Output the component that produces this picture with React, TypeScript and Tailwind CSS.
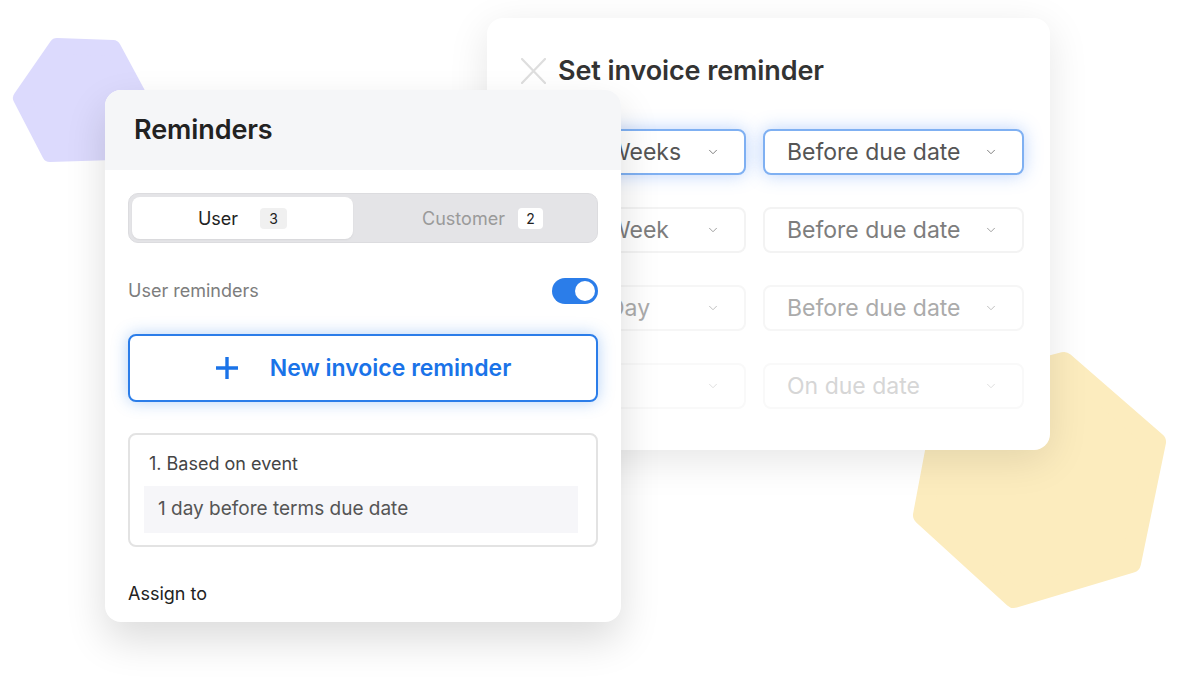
import { ChevronDown } from 'lucide-react';

type Row = { unit: string; rel: string; tone: 'active' | 'soft' | 'faint' | 'ghost' };

const rows: Row[] = [
  { unit: 'Weeks', rel: 'Before due date', tone: 'active' },
  { unit: 'Week', rel: 'Before due date', tone: 'soft' },
  { unit: 'Day', rel: 'Before due date', tone: 'faint' },
  { unit: '', rel: 'On due date', tone: 'ghost' },
];

const toneBox = {
  active: 'border-[#7fb0f2] shadow-[0_0_18px_rgba(59,130,246,0.35)] text-[#555]',
  soft: 'border-[#f3f3f3] text-[#7d7d7d]',
  faint: 'border-[#f6f6f6] text-[#ababab]',
  ghost: 'border-[#f9f9f9] text-[#d6d6d6]',
};

const toneChevron = {
  active: 'text-[#777]',
  soft: 'text-[#999]',
  faint: 'text-[#bbb]',
  ghost: 'text-[#ddd]',
};

function Select({ label, tone, className }: { label: string; tone: Row['tone']; className: string }) {
  return (
    <div className={`shrink-0 h-[46px] flex items-center justify-between pl-[22px] pr-[24px] bg-white border-2 rounded-lg ${toneBox[tone]} ${className}`}>
      <span>{label}</span>
      <ChevronDown className={`w-[14px] h-[14px] ${toneChevron[tone]}`} strokeWidth={1.6} />
    </div>
  );
}

function Hexagons() {
  return (
    <>
      <svg className="absolute left-0 top-0" width="170" height="180" viewBox="0 0 170 180">
        <polygon
          points="57,46 113,48 141,100 113,152 50,154 21,98"
          fill="#dcdafd"
          stroke="#dcdafd"
          strokeWidth="16"
          strokeLinejoin="round"
        />
      </svg>
      <svg className="absolute left-[880px] top-[330px]" width="310" height="300" viewBox="880 330 310 300">
        <polygon
          points="1064,362 1156,442 1131,563 1014,598 923,515 946,393"
          fill="#fcecbe"
          stroke="#fcecbe"
          strokeWidth="20"
          strokeLinejoin="round"
        />
      </svg>
    </>
  );
}

function InvoiceCard() {
  return (
    <div className="absolute left-[487px] top-[18px] w-[563px] h-[432px] rounded-2xl bg-white shadow-[0_10px_40px_rgba(0,0,0,0.10)] pl-[34px] pr-[26px] pt-[40px]">
      <div className="flex items-center gap-[12px] h-[26px]">
        <svg width="25" height="26" viewBox="0 0 25 26" className="shrink-0">
          <path d="M1 1L24 25M24 1L1 25" stroke="#dedede" strokeWidth="2.2" strokeLinecap="round" />
        </svg>
        <h2 className="text-[27px] font-semibold text-[#333] tracking-[-0.1px]">Set invoice reminder</h2>
      </div>
      <div className="mt-[45px] flex flex-col gap-[32px] text-[23px]">
        {rows.map((r, i) => (
          <div key={i} className="flex gap-[17px]">
            <div className={`shrink-0 w-[46px] h-[46px] bg-white border-2 rounded-lg ${toneBox[r.tone]}`} />
            <Select label={r.unit} tone={r.tone} className="w-[162px]" />
            <Select label={r.rel} tone={r.tone} className="w-[261px]" />
          </div>
        ))}
      </div>
    </div>
  );
}

function RemindersCard() {
  return (
    <div className="absolute left-[105px] top-[90px] w-[516px] h-[532px] rounded-2xl bg-white overflow-hidden shadow-[0_18px_40px_rgba(0,0,0,0.14)]">
      <div className="h-[80px] bg-[#f5f6f8] flex items-center pl-[29px]">
        <h1 className="text-[27px] font-semibold text-[#222] tracking-[-0.1px]">Reminders</h1>
      </div>
      <div className="px-[23px] pt-[23px]">
        <div className="h-[50px] rounded-[10px] bg-[#e4e4e7] border border-[#dcdcdf] p-[3px] flex">
          <div className="w-[221px] h-full rounded-[8px] bg-white flex items-center justify-center gap-[22px] text-[18px] text-[#222] shadow-[0_1px_2px_rgba(0,0,0,0.06)]">
            <span>User</span>
            <span className="w-[27px] h-[21px] rounded bg-[#f0f0f0] text-[14px] flex items-center justify-center">3</span>
          </div>
          <div className="flex-1 flex items-center justify-center gap-[13px] pl-[18px] text-[18px] text-[#9a9a9a]">
            <span>Customer</span>
            <span className="w-[25px] h-[21px] rounded bg-white text-[14px] text-[#222] flex items-center justify-center">2</span>
          </div>
        </div>

        <div className="mt-[34px] flex items-center justify-between">
          <span className="text-[18px] text-[#7d7d7d]">User reminders</span>
          <div className="w-[46px] h-[26px] rounded-full bg-[#2b7de9] flex items-center justify-end pr-[3px]">
            <div className="w-[20px] h-[20px] rounded-full bg-white" />
          </div>
        </div>

        <button className="mt-[30px] w-full h-[68px] rounded-lg border-2 border-[#2b7de9] bg-white flex items-center justify-center gap-[31px] shadow-[0_0_16px_rgba(43,125,233,0.35)] text-[23px] font-semibold text-[#1a73e8]">
          <svg width="24" height="24" viewBox="0 0 24 24">
            <path d="M12 1V23M1 12H23" stroke="#1a73e8" strokeWidth="3.4" />
          </svg>
          <span>New invoice reminder</span>
        </button>

        <div className="mt-[31px] h-[114px] rounded-lg border-2 border-[#e3e3e3] pl-[14px] pr-[18px] pt-[17px]">
          <div className="text-[18px] text-[#444] pl-[5px] leading-[24px]">1. Based on event</div>
          <div className="mt-[10px] h-[47px] bg-[#f6f6f9] flex items-center pl-[14px] text-[19px] text-[#555]">
            1 day before terms due date
          </div>
        </div>

        <div className="mt-[33px] text-[18px] text-[#222]">Assign to</div>
      </div>
    </div>
  );
}

export default function App() {
  return (
    <div className="relative w-[1200px] h-[687px] bg-white overflow-hidden" style={{ fontFamily: 'Inter, "Noto Sans", sans-serif' }}>
      <Hexagons />
      <InvoiceCard />
      <RemindersCard />
    </div>
  );
}
